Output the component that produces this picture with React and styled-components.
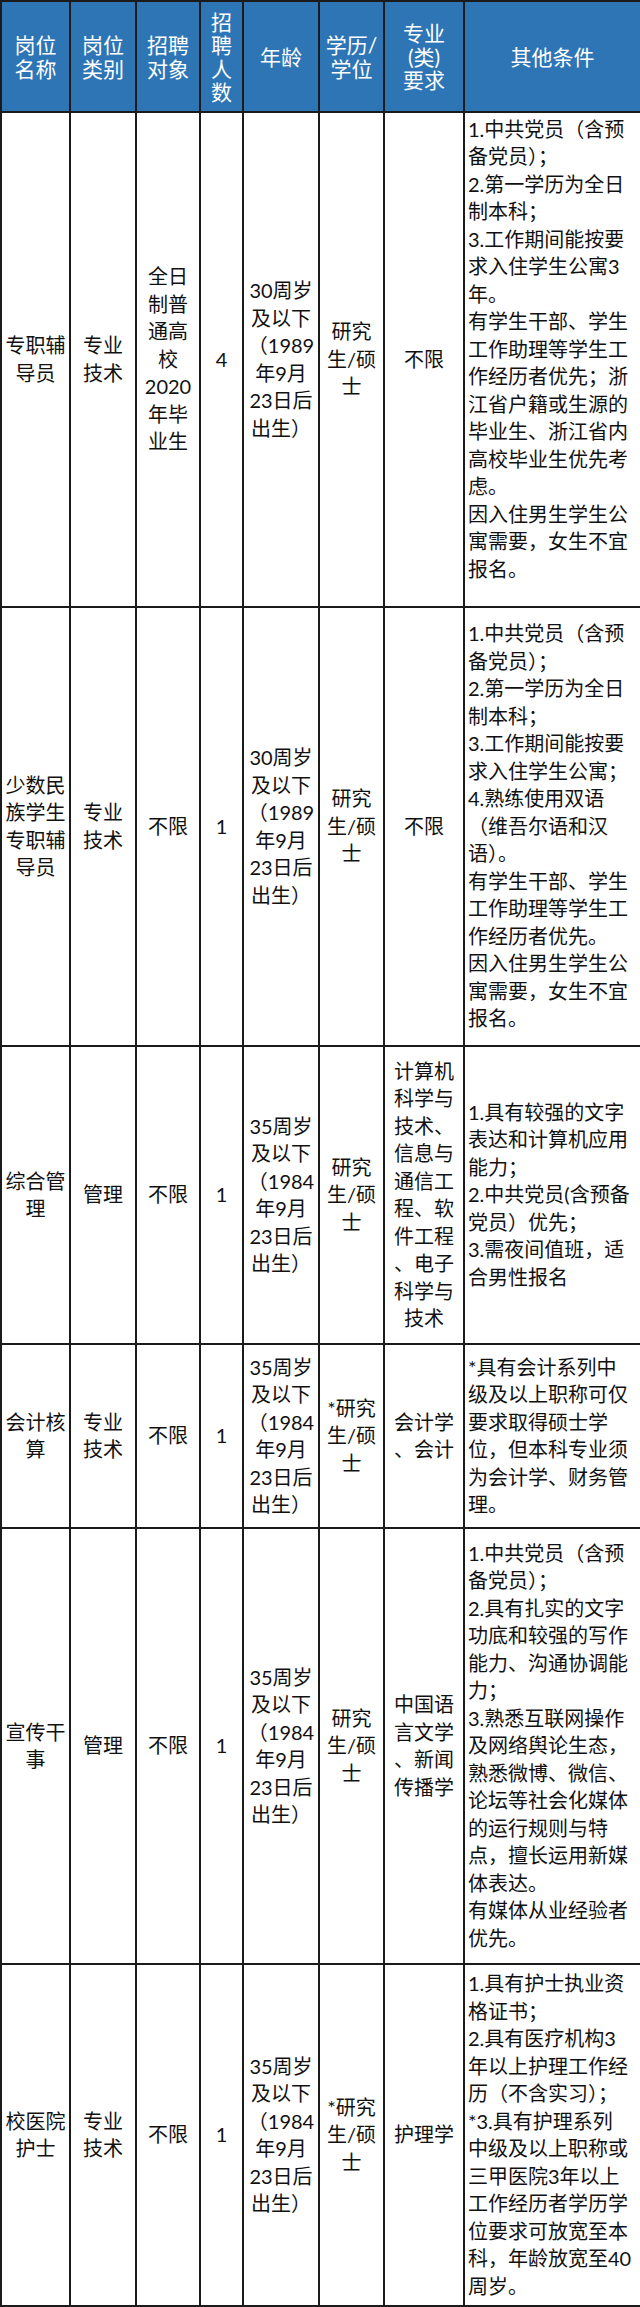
import React from 'react'
import styled, { createGlobalStyle } from 'styled-components'

const GlobalStyle = createGlobalStyle`
  html, body {
    margin: 0;
    padding: 0;
    background: #ffffff;
  }
  body {
    font-family: Lato, 'Noto Sans CJK SC', sans-serif;
    color: #111111;
  }
`

const columns = [
  { width: 69, label: ['岗位', '名称'] },
  { width: 66, label: ['岗位', '类别'] },
  { width: 64, label: ['招聘', '对象'] },
  { width: 43, label: ['招', '聘', '人', '数'] },
  { width: 76, label: ['年龄'] },
  { width: 65, label: ['学历/', '学位'] },
  { width: 80, label: ['专业', '(类)', '要求'] },
  { width: 177, label: ['其他条件'] },
]

const age89 = ['30周岁', '及以下', '（1989', '年9月', '23日后', '出生）']
const age84 = ['35周岁', '及以下', '（1984', '年9月', '23日后', '出生）']
const degree = ['研究', '生/硕', '士']
const degreeStar = ['*研究', '生/硕', '士']

const rows = [
  {
    height: 495,
    lift: 10,
    cells: [
      ['专职辅', '导员'],
      ['专业', '技术'],
      ['全日', '制普', '通高', '校', '2020', '年毕', '业生'],
      ['4'],
      age89,
      degree,
      ['不限'],
      [
        '1.中共党员（含预',
        '备党员）；',
        '2.第一学历为全日',
        '制本科；',
        '3.工作期间能按要',
        '求入住学生公寓3',
        '年。',
        '有学生干部、学生',
        '工作助理等学生工',
        '作经历者优先；浙',
        '江省户籍或生源的',
        '毕业生、浙江省内',
        '高校毕业生优先考',
        '虑。',
        '因入住男生学生公',
        '寓需要，女生不宜',
        '报名。',
      ],
    ],
  },
  {
    height: 439,
    cells: [
      ['少数民', '族学生', '专职辅', '导员'],
      ['专业', '技术'],
      ['不限'],
      ['1'],
      age89,
      degree,
      ['不限'],
      [
        '1.中共党员（含预',
        '备党员）；',
        '2.第一学历为全日',
        '制本科；',
        '3.工作期间能按要',
        '求入住学生公寓；',
        '4.熟练使用双语',
        '（维吾尔语和汉',
        '语）。',
        '有学生干部、学生',
        '工作助理等学生工',
        '作经历者优先。',
        '因入住男生学生公',
        '寓需要，女生不宜',
        '报名。',
      ],
    ],
  },
  {
    height: 298,
    cells: [
      ['综合管', '理'],
      ['管理'],
      ['不限'],
      ['1'],
      age84,
      degree,
      ['计算机', '科学与', '技术、', '信息与', '通信工', '程、软', '件工程', '、电子', '科学与', '技术'],
      [
        '1.具有较强的文字',
        '表达和计算机应用',
        '能力；',
        '2.中共党员(含预备',
        '党员）优先；',
        '3.需夜间值班，适',
        '合男性报名',
      ],
    ],
  },
  {
    height: 184,
    cells: [
      ['会计核', '算'],
      ['专业', '技术'],
      ['不限'],
      ['1'],
      age84,
      degreeStar,
      ['会计学', '、会计'],
      [
        '*具有会计系列中',
        '级及以上职称可仅',
        '要求取得硕士学',
        '位，但本科专业须',
        '为会计学、财务管',
        '理。',
      ],
    ],
  },
  {
    height: 436,
    cells: [
      ['宣传干', '事'],
      ['管理'],
      ['不限'],
      ['1'],
      age84,
      degree,
      ['中国语', '言文学', '、新闻', '传播学'],
      [
        '1.中共党员（含预',
        '备党员）；',
        '2.具有扎实的文字',
        '功底和较强的写作',
        '能力、沟通协调能',
        '力；',
        '3.熟悉互联网操作',
        '及网络舆论生态，',
        '熟悉微博、微信、',
        '论坛等社会化媒体',
        '的运行规则与特',
        '点，擅长运用新媒',
        '体表达。',
        '有媒体从业经验者',
        '优先。',
      ],
    ],
  },
  {
    height: 342,
    cells: [
      ['校医院', '护士'],
      ['专业', '技术'],
      ['不限'],
      ['1'],
      age84,
      degreeStar,
      ['护理学'],
      [
        '1.具有护士执业资',
        '格证书；',
        '2.具有医疗机构3',
        '年以上护理工作经',
        '历（不含实习）；',
        '*3.具有护理系列',
        '中级及以上职称或',
        '三甲医院3年以上',
        '工作经历者学历学',
        '位要求可放宽至本',
        '科，年龄放宽至40',
        '周岁。',
      ],
    ],
  },
]

export default function App() {
  return (
    <>
      <GlobalStyle />
      <Table>
        <colgroup>
          {columns.map((c, i) => (
            <Col key={i} $width={c.width} />
          ))}
        </colgroup>
        <thead>
          <HeadRow>
            {columns.map((c, i) => (
              <HeadCell key={i}>
                {c.label.map((l, j) => (
                  <Line key={j}>{l}</Line>
                ))}
              </HeadCell>
            ))}
          </HeadRow>
        </thead>
        <tbody>
          {rows.map((r, i) => (
            <Row key={i} $height={r.height}>
              {r.cells.map((lines, j) => {
                const last = j === r.cells.length - 1
                return (
                  <Cell key={j} $left={last} $lift={last ? r.lift || 0 : 0}>
                    {lines.map((l, k) => (
                      <Line key={k}>{l}</Line>
                    ))}
                  </Cell>
                )
              })}
            </Row>
          ))}
        </tbody>
      </Table>
    </>
  )
}

const Table = styled.table`
  width: 640px;
  table-layout: fixed;
  border-collapse: collapse;
`
const Col = styled.col`
  width: ${(p) => p.$width}px;
`
const HeadRow = styled.tr`
  height: 111px;
  background: #2e75b6;
`
const HeadCell = styled.th`
  border: 2px solid #1b1b1b;
  padding: 0;
  color: #ffffff;
  font-weight: normal;
  font-size: 21px;
  line-height: 23.5px;
  text-align: center;
  vertical-align: middle;
`
const Row = styled.tr`
  height: ${(p) => p.$height}px;
`
const Cell = styled.td`
  border: 2px solid #1b1b1b;
  padding: ${(p) => (p.$left ? `0 0 ${p.$lift * 2}px 3px` : '0')};
  font-size: 20px;
  line-height: 27.5px;
  text-align: ${(p) => (p.$left ? 'left' : 'center')};
  vertical-align: middle;
  overflow: hidden;
`
const Line = styled.div`
  white-space: nowrap;
`
